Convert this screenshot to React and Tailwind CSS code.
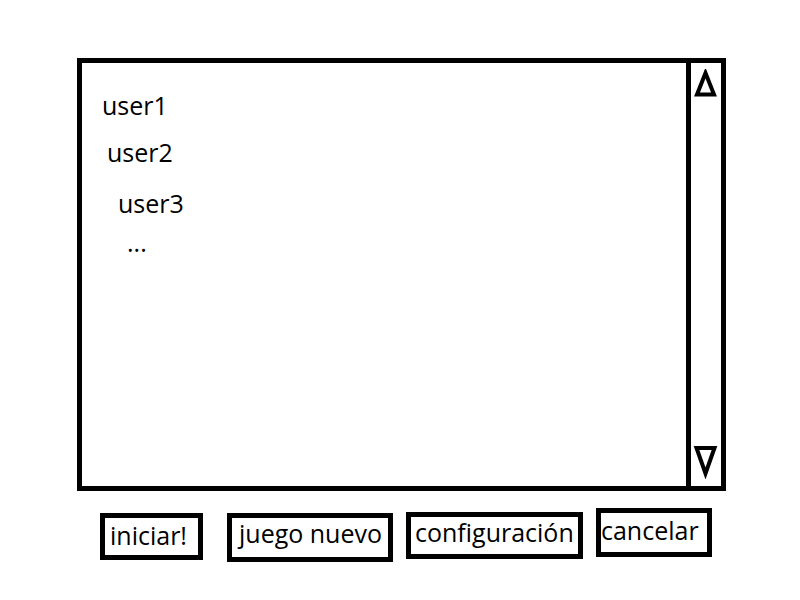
export default function App() {
  const font = { fontFamily: '"Open Sans", "Noto Sans", sans-serif' };
  return (
    <div className="w-[800px] h-[600px] bg-white text-black pt-[58px] pl-[77px]" style={font}>
      <div className="flex w-[649px] h-[433px] border-[5px] border-black">
        <div className="flex flex-col w-[605px] text-[25px] leading-[25px]">
          <div className="ml-[20px] mt-[30px]">user1</div>
          <div className="ml-[25px] mt-[22px]">user2</div>
          <div className="ml-[36px] mt-[26px]">user3</div>
          <div className="ml-[45px] mt-[14px]">...</div>
        </div>
        <div className="flex flex-col justify-between border-l-[5px] border-black w-[35px] pt-[6px] pb-[7px] pl-[2px]">
          <svg width="24" height="28" viewBox="0 0 24 28">
            <polygon points="12.5,4 4,25.5 21,25.5" fill="none" stroke="black" strokeWidth="4" strokeLinejoin="miter" />
          </svg>
          <svg width="26" height="33" viewBox="0 0 26 33">
            <polygon points="3.5,2 21.5,2 12.5,27.5" fill="none" stroke="black" strokeWidth="4" strokeLinejoin="miter" />
          </svg>
        </div>
      </div>
      <div className="flex items-start mt-[17px] text-[25px] leading-[25px]">
        <div className="ml-[23px] mt-[5px] w-[103px] h-[47px] border-[5px] border-black pl-[5px] pt-[5px] whitespace-nowrap">iniciar!</div>
        <div className="ml-[24px] mt-[5px] w-[166px] h-[49px] border-[5px] border-black pl-[7px] pt-[3px] whitespace-nowrap">juego nuevo</div>
        <div className="ml-[13px] mt-[4px] w-[177px] h-[47px] border-[5px] border-black pl-[4px] pt-[3px] whitespace-nowrap">configuración</div>
        <div className="ml-[13px] mt-0 w-[116px] h-[49px] border-[5px] border-black pl-0 pt-[5px] whitespace-nowrap">cancelar</div>
      </div>
    </div>
  );
}
